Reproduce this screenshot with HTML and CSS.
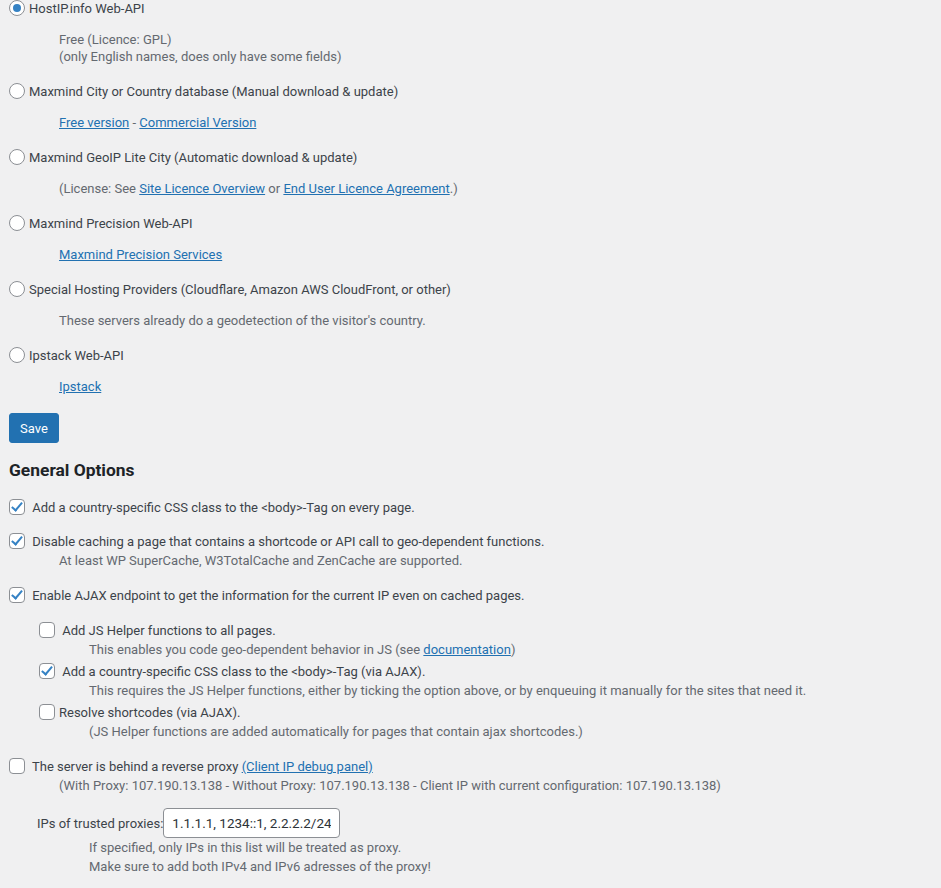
FILE: index.html
```html
<!DOCTYPE html>
<html lang="en">
<head>
  <meta charset="UTF-8">
  <meta name="viewport" content="width=device-width, initial-scale=1.0">
  <title>Geolocation IP Detection</title>
  <link rel="stylesheet" href="styles.css">
</head>
<body>
  <form class="wrap">

    <!-- Data sources -->
    <div class="source">
      <label class="opt"><input type="radio" name="source" value="hostip" checked>HostIP.info Web-API</label>
      <p class="source-desc">Free (Licence: GPL)<br>(only English names, does only have some fields)</p>
    </div>
    <div class="source">
      <label class="opt"><input type="radio" name="source" value="manual">Maxmind City or Country database (Manual download &amp; update)</label>
      <p class="source-desc"><a href="#">Free version</a> - <a href="#">Commercial Version</a></p>
    </div>
    <div class="source">
      <label class="opt"><input type="radio" name="source" value="auto">Maxmind GeoIP Lite City (Automatic download &amp; update)</label>
      <p class="source-desc">(License: See <a href="#">Site Licence Overview</a> or <a href="#">End User Licence Agreement</a>.)</p>
    </div>
    <div class="source">
      <label class="opt"><input type="radio" name="source" value="precision">Maxmind Precision Web-API</label>
      <p class="source-desc"><a href="#">Maxmind Precision Services</a></p>
    </div>
    <div class="source">
      <label class="opt"><input type="radio" name="source" value="header">Special Hosting Providers (Cloudflare, Amazon AWS CloudFront, or other)</label>
      <p class="source-desc">These servers already do a geodetection of the visitor's country.</p>
    </div>
    <div class="source">
      <label class="opt"><input type="radio" name="source" value="ipstack">Ipstack Web-API</label>
      <p class="source-desc"><a href="#">Ipstack</a></p>
    </div>

    <button type="submit" class="button-primary">Save</button>

    <!-- General Options -->
    <h2>General Options</h2>

    <div class="field">
      <label class="opt"><input type="checkbox" checked> Add a country-specific CSS class to the &lt;body&gt;-Tag on every page.</label>
    </div>
    <div class="field">
      <label class="opt"><input type="checkbox" checked> Disable caching a page that contains a shortcode or API call to geo-dependent functions.</label>
      <p class="field-desc">At least WP SuperCache, W3TotalCache and ZenCache are supported.</p>
    </div>
    <div class="field">
      <label class="opt"><input type="checkbox" checked> Enable AJAX endpoint to get the information for the current IP even on cached pages.</label>

      <div class="sub-fields">
        <div class="sub-field">
          <label class="opt"><input type="checkbox"> Add JS Helper functions to all pages.</label>
          <p class="field-desc">This enables you code geo-dependent behavior in JS (see <a href="#">documentation</a>)</p>
        </div>
        <div class="sub-field">
          <label class="opt"><input type="checkbox" checked> Add a country-specific CSS class to the &lt;body&gt;-Tag (via AJAX).</label>
          <p class="field-desc">This requires the JS Helper functions, either by ticking the option above, or by enqueuing it manually for the sites that need it.</p>
        </div>
        <div class="sub-field">
          <label class="opt"><input type="checkbox">Resolve shortcodes (via AJAX).</label>
          <p class="field-desc">(JS Helper functions are added automatically for pages that contain ajax shortcodes.)</p>
        </div>
      </div>
    </div>

    <div class="field">
      <label class="opt"><input type="checkbox"> The server is behind a reverse proxy <a href="#">(Client IP debug panel)</a></label>
      <p class="field-desc">(With Proxy: 107.190.13.138 - Without Proxy: 107.190.13.138 - Client IP with current configuration: 107.190.13.138)</p>

      <div class="proxy-row">
        <label for="trustedProxies">IPs of trusted proxies:</label><input type="text" id="trustedProxies" value="1.1.1.1, 1234::1, 2.2.2.2/24">
      </div>
      <p class="proxy-desc">If specified, only IPs in this list will be treated as proxy.<br>Make sure to add both IPv4 and IPv6 adresses of the proxy!</p>
    </div>
  </form>
</body>
</html>
```
FILE: styles.css
```css
body {
  margin: 0;
  background-color: #f0f0f1;
  color: #3c434a;
  font-family: Roboto, "Liberation Sans", sans-serif;
  font-size: 13px;
}
.wrap {
  padding: 0 9px;
}
a {
  color: #2271b1;
  text-decoration: underline;
}
p {
  margin: 0;
}

/* radio + checkbox rows */
.opt {
  display: block;
  line-height: 17px;
  height: 16px;
  white-space: nowrap;
}
.opt input {
  -webkit-appearance: none;
  appearance: none;
  position: relative;
  box-sizing: border-box;
  width: 16px;
  height: 16px;
  margin: 0 4px 0 0;
  vertical-align: top;
  background-color: #fff;
  border: 1px solid #8c8f94;
}
.opt input[type="radio"] {
  border-radius: 50%;
}
.opt input[type="radio"]:checked::before {
  content: "";
  position: absolute;
  left: 3px;
  top: 3px;
  width: 8px;
  height: 8px;
  border-radius: 50%;
  background-color: #3582c4;
}
.opt input[type="checkbox"] {
  border-radius: 4px;
}
.opt input[type="checkbox"]:checked::before {
  content: "";
  position: absolute;
  left: 4px;
  top: 0px;
  width: 4px;
  height: 9px;
  border-right: 2.5px solid #3582c4;
  border-bottom: 2.5px solid #3582c4;
  transform: rotate(40deg);
}

/* data sources */
.source {
  margin-bottom: 18px;
}
.source-desc {
  margin: 15px 0 0 50px;
  line-height: 17px;
  color: #646970;
}

.button-primary {
  display: block;
  margin-top: 1px;
  padding: 0 10px;
  height: 30px;
  font-family: inherit;
  font-size: 13px;
  color: #fff;
  background-color: #2271b1;
  border: 1px solid #2271b1;
  border-radius: 3px;
  cursor: pointer;
}
.button-primary:hover {
  background-color: #135e96;
}

h2 {
  margin: 16px 0 18px;
  font-size: 17.4px;
  font-weight: 700;
  line-height: 22px;
  color: #1d2327;
}

/* general options */
.field {
  margin-bottom: 18px;
}
.field-desc {
  margin: 3px 0 0 50px;
  line-height: 17px;
  color: #646970;
}
.sub-fields {
  margin-top: 19px;
  padding-left: 30px;
}
.sub-field {
  margin-bottom: 5px;
}
.sub-field:last-child {
  margin-bottom: 0;
}

.proxy-row {
  display: flex;
  align-items: center;
  margin-top: 14px;
  padding-left: 28px;
}
.proxy-row input {
  box-sizing: border-box;
  width: 177px;
  height: 30px;
  padding: 0 8px;
  font-family: inherit;
  font-size: 13.5px;
  color: #2c3338;
  background-color: #fff;
  border: 1px solid #8c8f94;
  border-radius: 4px;
}
.proxy-desc {
  padding-left: 80px;
  line-height: 19px;
  color: #646970;
}
```
